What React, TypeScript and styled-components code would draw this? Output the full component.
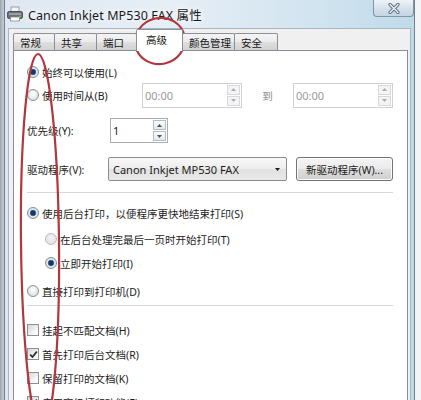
import React from 'react';
import styled, { createGlobalStyle } from 'styled-components';

const GlobalStyle = createGlobalStyle`
  html, body {
    margin: 0;
    height: 400px;
    overflow: hidden;
  }
  body {
    background: linear-gradient(to right, #9da6b0 0, #c8ced5 4px, #f3f4f5 4px);
    font-family: "Noto Sans", "Noto Sans CJK SC", sans-serif;
    color: #1c1c1c;
  }
`;

const Page = styled.div`
  position: relative;
  width: 421px;
  height: 400px;
  overflow: hidden;
`;

const Window = styled.div`
  box-sizing: border-box;
  margin-left: 4px;
  width: 411px;
  height: 440px;
  border: 1px solid #6f7e91;
  border-top: none;
  background: linear-gradient(to right, #dfe8f2 0%, #e6eef6 40%, #d2e4f0 75%, #bfdbe8 100%);
  display: flex;
  flex-direction: column;
`;

const TitleBar = styled.div`
  height: 28px;
  display: flex;
  align-items: center;
  padding-left: 1px;
`;

const TitleText = styled.span`
  margin-left: 4px;
  font-size: 12.5px;
  color: #1a1a1a;
  text-shadow: 0 0 6px #ffffff, 0 0 10px #ffffff;
  letter-spacing: 0.1px;
`;

const CloseButton = styled.div`
  align-self: flex-start;
  margin-left: auto;
  box-sizing: border-box;
  width: 41px;
  height: 17px;
  border: 1px solid #8395aa;
  border-top: none;
  border-radius: 0 0 4px 4px;
  background: linear-gradient(#eef3f8, #d5e1ec 50%, #c3d4e3);
  display: flex;
  align-items: center;
  justify-content: center;
`;

const Client = styled.div`
  flex: 1;
  margin: 0 3px;
  border: 1px solid #a9b6c4;
  border-bottom: none;
  background: #f0f0f0;
  padding: 0 2px 0 4px;
  display: flex;
  flex-direction: column;
`;

const TabRow = styled.div`
  display: flex;
  align-items: flex-end;
  height: 22px;
  margin-bottom: -1px;
  position: relative;
  z-index: 1;
`;

const Tab = styled.div<{ $w: number; $active?: boolean }>`
  box-sizing: border-box;
  width: ${p => p.$w}px;
  height: ${p => (p.$active ? 22 : 17)}px;
  margin-bottom: ${p => (p.$active ? 0 : 1)}px;
  margin-left: -1px;
  &:first-child {
    margin-left: 0;
  }
  border: 1px solid #8c8f97;
  border-bottom: none;
  border-radius: 2px 2px 0 0;
  background: ${p =>
    p.$active ? '#ffffff' : 'linear-gradient(#f4f4f4, #ececec 48%, #dedede 52%, #d2d2d2)'};
  padding: ${p => (p.$active ? '0 0 2px 9px' : '0 0 0 6px')};
  display: flex;
  align-items: center;
  font-size: 10.5px;
  color: #161616;
  white-space: nowrap;
`;

const Panel = styled.div`
  flex: 1;
  background: #ffffff;
  border: 1px solid #898c95;
  padding: 11px 0 0 13px;
  display: flex;
  flex-direction: column;
`;

const Row = styled.div<{ $h: number; $mt?: number; $indent?: number }>`
  display: flex;
  align-items: center;
  height: ${p => p.$h}px;
  margin-top: ${p => p.$mt ?? 0}px;
  padding-left: ${p => p.$indent ?? 0}px;
  flex-shrink: 0;
  font-size: 10.5px;
  white-space: nowrap;
`;

const Label = styled.span<{ $w?: number; $muted?: boolean }>`
  display: flex;
  align-items: center;
  ${p => (p.$w ? `width: ${p.$w}px;` : '')}
  color: ${p => (p.$muted ? '#8e8e8e' : '#1c1c1c')};
  flex-shrink: 0;
`;

const Radio = styled.span<{ $checked?: boolean; $disabled?: boolean }>`
  box-sizing: border-box;
  width: 12px;
  height: 12px;
  margin-right: 3px;
  border-radius: 50%;
  flex-shrink: 0;
  border: 1px solid ${p => (p.$disabled ? '#b9bbbe' : '#8b8d90')};
  background: ${p =>
    p.$checked
      ? 'radial-gradient(circle, #17385e 0 2px, #4f80b8 3px, #e6ebf0 3.6px, #cfd4da 6px)'
      : p.$disabled
      ? 'radial-gradient(circle at 50% 40%, #f4f4f4, #dcdcdc)'
      : 'radial-gradient(circle at 50% 40%, #ffffff, #d4d6d9)'};
`;

const CheckBox = styled.span`
  box-sizing: border-box;
  width: 12px;
  height: 12px;
  margin-right: 3px;
  flex-shrink: 0;
  border: 1px solid #8e8f8f;
  background: linear-gradient(135deg, #d6d6d6, #f7f7f7 70%, #ffffff);
  display: flex;
  align-items: center;
  justify-content: center;
`;

const SpinField = styled.div<{ $w: number; $disabled?: boolean }>`
  box-sizing: border-box;
  width: ${p => p.$w}px;
  height: 25px;
  flex-shrink: 0;
  border: 1px solid ${p => (p.$disabled ? '#cdd0d4' : '#a9adb3')};
  background: #ffffff;
  padding: 1px 1px 1px 0;
  display: flex;
`;

const FieldText = styled.span<{ $disabled?: boolean }>`
  flex: 1;
  padding-left: 2px;
  display: flex;
  align-items: center;
  font-size: 11px;
  color: ${p => (p.$disabled ? '#9a9a9a' : '#1c1c1c')};
`;

const SpinButtons = styled.div`
  width: 13px;
  display: flex;
  flex-direction: column;
  gap: 1px;
`;

const SpinButton = styled.div<{ $disabled?: boolean }>`
  flex: 1;
  box-sizing: border-box;
  border: 1px solid ${p => (p.$disabled ? '#d6d8db' : '#b6bcc3')};
  background: ${p =>
    p.$disabled ? '#f4f4f4' : 'linear-gradient(#fbfbfb, #e4e7ea)'};
  display: flex;
  align-items: center;
  justify-content: center;
`;

const Spacer = styled.span<{ $w: number }>`
  width: ${p => p.$w}px;
  flex-shrink: 0;
  display: flex;
  justify-content: center;
  color: #8e8e8e;
`;

const Select = styled.div`
  box-sizing: border-box;
  width: 179px;
  height: 24px;
  flex-shrink: 0;
  border: 1px solid #8a8d92;
  border-radius: 2px;
  background: linear-gradient(#f8f8f8, #ededed 50%, #e2e2e2 51%, #e8e8e8);
  display: flex;
  align-items: center;
  padding: 0 6px 0 4px;
  font-size: 11px;
`;

const SelectText = styled.span`
  flex: 1;
`;

const Button = styled.div`
  box-sizing: border-box;
  margin-left: 9px;
  width: 97px;
  height: 24px;
  flex-shrink: 0;
  border: 1px solid #737373;
  border-radius: 3px;
  background: linear-gradient(#f4f4f4, #ebebeb 48%, #dddddd 52%, #cfcfcf);
  box-shadow: inset 0 0 0 1px #fbfbfb;
  display: flex;
  align-items: center;
  justify-content: center;
  font-size: 10.5px;
`;

const Separator = styled.div<{ $mt: number }>`
  width: 366px;
  height: 1px;
  margin-top: ${p => p.$mt}px;
  background: #d3d9df;
  flex-shrink: 0;
`;

const Annotations = styled.svg`
  position: absolute;
  top: 0;
  left: 0;
  pointer-events: none;
`;

const Arrow = ({ up, color }: { up?: boolean; color: string }) => (
  <svg width="5" height="3" viewBox="0 0 5 3">
    <polygon points={up ? '0,3 2.5,0 5,3' : '0,0 2.5,3 5,0'} fill={color} />
  </svg>
);

const Spin = ({ disabled }: { disabled?: boolean }) => {
  const c = disabled ? '#a8acb1' : '#4a5360';
  return (
    <SpinButtons>
      <SpinButton $disabled={disabled}>
        <Arrow up color={c} />
      </SpinButton>
      <SpinButton $disabled={disabled}>
        <Arrow color={c} />
      </SpinButton>
    </SpinButtons>
  );
};

const Check = () => (
  <svg width="9" height="9" viewBox="0 0 9 9">
    <path d="M1.2 4.6 L3.5 7 L7.8 1.6" fill="none" stroke="#2b2b2b" strokeWidth="1.7" />
  </svg>
);

const PrinterIcon = () => (
  <svg width="18" height="18" viewBox="0 0 18 18">
    <rect x="5" y="2" width="8" height="5" fill="#f4f4f4" stroke="#8a8a8a" strokeWidth="0.8" />
    <rect x="1.5" y="6.5" width="15" height="7" rx="1.5" fill="#6b7075" stroke="#3e4246" strokeWidth="0.8" />
    <rect x="3" y="8" width="12" height="2" fill="#9aa0a6" />
    <rect x="4.5" y="12" width="9" height="4" fill="#ffffff" stroke="#8a8a8a" strokeWidth="0.8" />
    <circle cx="14" cy="11.5" r="1" fill="#5fcf4a" />
  </svg>
);

const CloseGlyph = () => (
  <svg width="12" height="11" viewBox="0 0 12 11">
    <path d="M2 1.5 L10 9.5 M10 1.5 L2 9.5" stroke="#5e6e80" strokeWidth="3.2" strokeLinecap="round" />
    <path d="M2 1.5 L10 9.5 M10 1.5 L2 9.5" stroke="#eef2f6" strokeWidth="1.4" strokeLinecap="round" />
  </svg>
);

const tabs = [
  { label: '常规', w: 42 },
  { label: '共享', w: 43 },
  { label: '端口', w: 41 },
  { label: '高级', w: 47, active: true },
  { label: '颜色管理', w: 53 },
  { label: '安全', w: 44 },
];

export default function App() {
  return (
    <Page>
      <GlobalStyle />
      <Window>
        <TitleBar>
          <PrinterIcon />
          <TitleText>Canon Inkjet MP530 FAX 属性</TitleText>
          <CloseButton>
            <CloseGlyph />
          </CloseButton>
        </TitleBar>
        <Client>
          <TabRow>
            {tabs.map(t => (
              <Tab key={t.label} $w={t.w} $active={t.active}>
                {t.label}
              </Tab>
            ))}
          </TabRow>
          <Panel>
            <Row $h={20}>
              <Radio $checked />
              <Label>始终可以使用(L)</Label>
            </Row>
            <Row $h={26}>
              <Label $w={115}>
                <Radio />
                使用时间从(B)
              </Label>
              <SpinField $w={100} $disabled>
                <FieldText $disabled>00:00</FieldText>
                <Spin disabled />
              </SpinField>
              <Spacer $w={51}>到</Spacer>
              <SpinField $w={100} $disabled>
                <FieldText $disabled>00:00</FieldText>
                <Spin disabled />
              </SpinField>
            </Row>
            <Row $h={25} $mt={10}>
              <Label $w={83}>优先级(Y):</Label>
              <SpinField $w={58}>
                <FieldText>1</FieldText>
                <Spin />
              </SpinField>
            </Row>
            <Row $h={24} $mt={14}>
              <Label $w={81}>驱动程序(V):</Label>
              <Select>
                <SelectText>Canon Inkjet MP530 FAX</SelectText>
                <Arrow color="#1c1c1c" />
              </Select>
              <Button>新驱动程序(W)...</Button>
            </Row>
            <Separator $mt={11} />
            <Row $h={20} $mt={10}>
              <Radio $checked />
              <Label>使用后台打印，以便程序更快地结束打印(S)</Label>
            </Row>
            <Row $h={20} $mt={6} $indent={18}>
              <Radio $disabled />
              <Label>在后台处理完最后一页时开始打印(T)</Label>
            </Row>
            <Row $h={20} $mt={4} $indent={18}>
              <Radio $checked />
              <Label>立即开始打印(I)</Label>
            </Row>
            <Row $h={20} $mt={8}>
              <Radio />
              <Label>直接打印到打印机(D)</Label>
            </Row>
            <Separator $mt={4} />
            <Row $h={20} $mt={14}>
              <CheckBox />
              <Label>挂起不匹配文档(H)</Label>
            </Row>
            <Row $h={20} $mt={4}>
              <CheckBox>
                <Check />
              </CheckBox>
              <Label>首先打印后台文档(R)</Label>
            </Row>
            <Row $h={20} $mt={4}>
              <CheckBox />
              <Label>保留打印的文档(K)</Label>
            </Row>
            <Row $h={20} $mt={4}>
              <CheckBox>
                <Check />
              </CheckBox>
              <Label>启用高级打印功能(E)</Label>
            </Row>
          </Panel>
        </Client>
      </Window>
      <Annotations width="421" height="400" viewBox="0 0 421 400">
        <ellipse
          cx="160"
          cy="41"
          rx="25"
          ry="23"
          transform="rotate(-12 160 41)"
          fill="none"
          stroke="#b2363e"
          strokeWidth="2.2"
        />
        <ellipse
          cx="40"
          cy="242"
          rx="19"
          ry="188"
          transform="rotate(-0.6 40 242)"
          fill="none"
          stroke="#b2363e"
          strokeWidth="2.2"
        />
      </Annotations>
    </Page>
  );
}
